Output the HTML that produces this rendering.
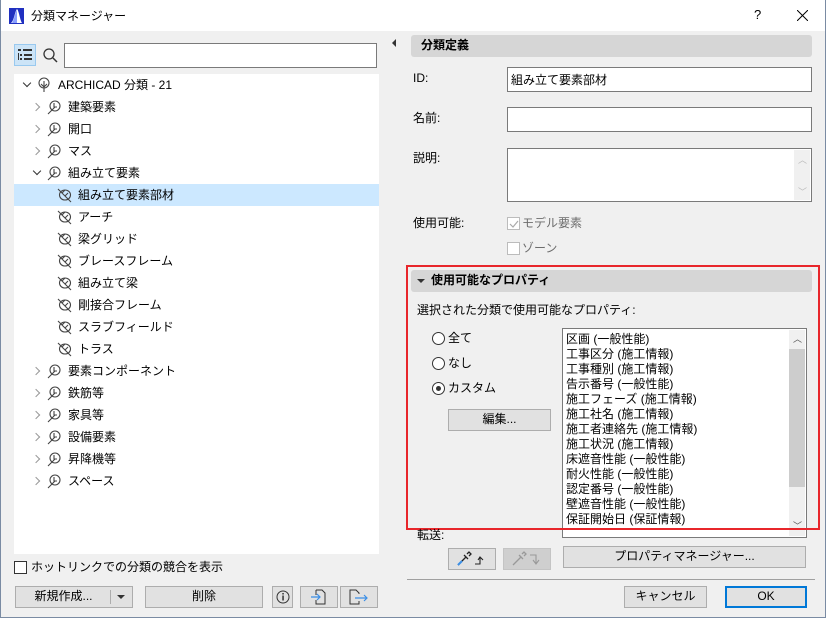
<!DOCTYPE html>
<html><head><meta charset="utf-8">
<style>
*{box-sizing:border-box;margin:0;padding:0}
body{width:826px;height:618px;overflow:hidden;background:#f0f0f0;font-family:"Liberation Sans","Noto Sans CJK JP",sans-serif;font-size:12px;color:#000;position:relative}
.a{position:absolute}
.win{left:0;top:0;width:826px;height:618px;border:1px solid #7a8ba3;border-top:none}
.title{left:0;top:0;width:826px;height:31px;background:#fff;border-left:1px solid #7a8ba3;border-right:1px solid #7a8ba3}
.t{position:absolute;white-space:nowrap;line-height:14px}
.inp{position:absolute;background:#fff;border:1px solid #7a7a7a}
.btn{position:absolute;background:#e1e1e1;border:1px solid #adadad;text-align:center;line-height:19px}
.hdr{position:absolute;background:#d6d6d6;border-radius:3px;font-weight:bold;padding-left:10px;line-height:21px}
.chev{position:absolute;width:6px;height:6px;border-right:1.3px solid #999;border-bottom:1.3px solid #999}
.cb{position:absolute;width:13px;height:13px;border:1px solid #333;background:#fff}
.rad{position:absolute;width:13px;height:13px;border:1px solid #333;border-radius:50%;background:#fff}
</style></head><body>
<div class="a title"></div>
<svg class="a" style="left:9px;top:8px" width="15" height="16"><rect x="0" y="0" width="15" height="16" fill="#2030c0"/><path d="M2 15 C5 13 6 3 8 1 C10 3 11 12 13 15 Z" fill="#fff"/><path d="M3 15 C5 12 6 5 8 2 L8 15Z" fill="#8aa0ff"/></svg>
<div class="t" style="left:31px;top:9px">分類マネージャー</div>
<div class="t" style="left:754px;top:8px;font-size:13px">?</div>
<svg class="a" style="left:797px;top:10px" width="11" height="11"><path d="M0 0L11 11M11 0L0 11" stroke="#000" stroke-width="1"/></svg>
<div class="a win"></div>

<!-- left top -->
<div class="a" style="left:14px;top:44px;width:22px;height:22px;background:#cce4f7;border:1px solid #99c9ef"></div>
<svg class="a" style="left:17px;top:48px" width="16" height="14"><rect x="1" y="1" width="3" height="2" fill="#333"/><rect x="6" y="1" width="9" height="2" fill="#333"/><rect x="1" y="5" width="1" height="7" fill="#333"/><rect x="3" y="6" width="2" height="2" fill="#333"/><rect x="7" y="6" width="8" height="2" fill="#333"/><rect x="3" y="10" width="2" height="2" fill="#333"/><rect x="7" y="10" width="8" height="2" fill="#333"/></svg>
<svg class="a" style="left:42px;top:47px" width="16" height="16"><circle cx="7" cy="7" r="5" fill="none" stroke="#333" stroke-width="1.3"/><path d="M11 11L15 15" stroke="#333" stroke-width="1.5"/></svg>
<div class="inp" style="left:64px;top:43px;width:313px;height:25px"></div>

<div class="a" style="left:14px;top:74px;width:365px;height:480px;background:#fff"></div>
<div class="a" style="left:14px;top:184px;width:365px;height:22px;background:#cce8ff"></div>

<!-- tree -->
<div id="tree"></div>
<script>
var rows=[[0,'ARCHICAD 分類 - 21','d'],[1,'建築要素','r'],[1,'開口','r'],[1,'マス','r'],[1,'組み立て要素','d'],[2,'組み立て要素部材',''],[2,'アーチ',''],[2,'梁グリッド',''],[2,'ブレースフレーム',''],[2,'組み立て梁',''],[2,'剛接合フレーム',''],[2,'スラブフィールド',''],[2,'トラス',''],[1,'要素コンポーネント','r'],[1,'鉄筋等','r'],[1,'家具等','r'],[1,'設備要素','r'],[1,'昇降機等','r'],[1,'スペース','r']];
var h='';
rows.forEach(function(r,i){
 var y=85+i*22, lv=r[0];
 var cx=[23,33,0][lv], ix=[36,46,56][lv], tx=[58,68,78][lv];
 if(r[2]=='r') h+='<div class="chev" style="left:'+(cx)+'px;top:'+(y-3)+'px;transform:rotate(-45deg)"></div>';
 if(r[2]=='d') h+='<div class="chev" style="left:'+(cx+1)+'px;top:'+(y-5)+'px;transform:rotate(45deg);border-color:#333"></div>';
 var ic;
 if(lv==0) ic='<circle cx="8" cy="6" r="5" fill="none" stroke="#444" stroke-width="1.1"/><path d="M8 4V15M5 7L8 10L11 7" stroke="#444" fill="none" stroke-width="1.1"/>';
 else if(lv==1) ic='<circle cx="9" cy="7" r="5" fill="none" stroke="#444" stroke-width="1.1"/><path d="M2 15L9 8M8 4V8H11" stroke="#444" fill="none" stroke-width="1.1"/>';
 else ic='<ellipse cx="9" cy="8" rx="5.5" ry="5" fill="none" stroke="#444" stroke-width="1.1"/><path d="M2 2L15 15M6 6L9 3M9 9L12 6" stroke="#444" fill="none" stroke-width="1.1"/>';
 h+='<svg class="a" style="left:'+ix+'px;top:'+(y-8)+'px" width="17" height="17">'+ic+'</svg>';
 h+='<div class="t" style="left:'+tx+'px;top:'+(y-7)+'px">'+r[1]+'</div>';
});
document.getElementById('tree').innerHTML=h;
</script>

<div class="cb" style="left:14px;top:561px"></div>
<div class="t" style="left:31px;top:560px">ホットリンクでの分類の競合を表示</div>
<div class="btn" style="left:15px;top:586px;width:118px;height:22px"><span style="position:absolute;left:0;width:95px">新規作成...</span></div>
<div class="a" style="left:110px;top:590px;width:1px;height:14px;background:#adadad"></div>
<div class="a" style="left:117px;top:595px;border-left:4px solid transparent;border-right:4px solid transparent;border-top:4px solid #333"></div>
<div class="btn" style="left:145px;top:586px;width:118px;height:22px">削除</div>
<div class="btn" style="left:272px;top:586px;width:21px;height:22px"></div>
<svg class="a" style="left:276px;top:590px" width="14" height="14"><circle cx="7" cy="7" r="6" fill="none" stroke="#333"/><rect x="6.3" y="3" width="1.5" height="1.5" fill="#333"/><rect x="6.3" y="5.5" width="1.5" height="5" fill="#333"/></svg>
<div class="btn" style="left:300px;top:586px;width:38px;height:22px"></div>
<svg class="a" style="left:309px;top:589px" width="20" height="16"><path d="M7 1H13L16 4V15H7V11M7 6V1" fill="none" stroke="#333"/><path d="M2 8H11M8 5L11 8L8 11" fill="none" stroke="#3a8ee6" stroke-width="1.2"/></svg>
<div class="btn" style="left:340px;top:586px;width:38px;height:22px"></div>
<svg class="a" style="left:349px;top:589px" width="22" height="16"><path d="M10 12V15H1V1H7L10 4V5" fill="none" stroke="#333"/><path d="M6 9H18M15 6L18 9L15 12" fill="none" stroke="#3a8ee6" stroke-width="1.2"/></svg>

<div class="a" style="left:392px;top:39px;border-top:4px solid transparent;border-bottom:4px solid transparent;border-right:4px solid #333"></div>

<!-- right -->
<div class="hdr" style="left:411px;top:35px;width:401px;height:22px">分類定義</div>
<div class="t" style="left:413px;top:71px">ID:</div>
<div class="inp" style="left:507px;top:67px;width:305px;height:25px"><span class="t" style="left:3px;top:5px">組み立て要素部材</span></div>
<div class="t" style="left:413px;top:111px">名前:</div>
<div class="inp" style="left:507px;top:107px;width:305px;height:25px"></div>
<div class="t" style="left:413px;top:151px">説明:</div>
<div class="inp" style="left:507px;top:148px;width:305px;height:54px"><div class="a" style="right:1px;top:1px;width:16px;height:50px;background:#f0f0f0"></div>
<span class="t" style="right:4px;top:4px;color:#bbb;font-size:9px">︿</span><span class="t" style="right:4px;top:36px;color:#bbb;font-size:9px">﹀</span></div>
<div class="t" style="left:413px;top:216px">使用可能:</div>
<div class="cb" style="left:507px;top:217px;border-color:#bcbcbc"></div>
<svg class="a" style="left:508px;top:218px" width="12" height="12"><path d="M2 6L5 9L10 3" fill="none" stroke="#aaa" stroke-width="1.2"/></svg>
<div class="t" style="left:522px;top:216px;color:#6d6d6d">モデル要素</div>
<div class="cb" style="left:507px;top:242px;border-color:#bcbcbc"></div>
<div class="t" style="left:522px;top:241px;color:#6d6d6d">ゾーン</div>

<div class="hdr" style="left:411px;top:270px;width:401px;height:22px;padding-left:20px">使用可能なプロパティ</div>
<div class="a" style="left:417px;top:279px;border-left:4px solid transparent;border-right:4px solid transparent;border-top:4px solid #333"></div>
<div class="t" style="left:417px;top:303px">選択された分類で使用可能なプロパティ:</div>
<div class="rad" style="left:432px;top:332px"></div><div class="t" style="left:448px;top:331px">全て</div>
<div class="rad" style="left:432px;top:357px"></div><div class="t" style="left:448px;top:356px">なし</div>
<div class="rad" style="left:432px;top:382px"></div><div class="a" style="left:436px;top:386px;width:5px;height:5px;border-radius:50%;background:#333"></div><div class="t" style="left:448px;top:381px">カスタム</div>
<div class="btn" style="left:448px;top:409px;width:103px;height:22px">編集...</div>

<div class="inp" style="left:562px;top:328px;width:245px;height:210px;overflow:hidden">
<div class="a" style="right:1px;top:1px;width:16px;height:206px;background:#f0f0f0"></div>
<div class="a" style="right:1px;top:20px;width:16px;height:138px;background:#cdcdcd"></div>
<span class="t" style="right:4px;top:3px;font-size:9px;color:#555">︿</span>
<span class="t" style="right:4px;top:190px;font-size:9px;color:#555">﹀</span>
<div style="position:absolute;left:3px;top:3px;line-height:15px">区画 (一般性能)<br>工事区分 (施工情報)<br>工事種別 (施工情報)<br>告示番号 (一般性能)<br>施工フェーズ (施工情報)<br>施工社名 (施工情報)<br>施工者連絡先 (施工情報)<br>施工状況 (施工情報)<br>床遮音性能 (一般性能)<br>耐火性能 (一般性能)<br>認定番号 (一般性能)<br>壁遮音性能 (一般性能)<br>保証開始日 (保証情報)</div>
</div>
<div class="a" style="left:406px;top:265px;width:414px;height:265px;border:2px solid #e8262b"></div>

<div class="t" style="left:417px;top:528px">転送:</div>
<div class="btn" style="left:448px;top:548px;width:48px;height:22px"></div>
<svg class="a" style="left:455px;top:550px" width="36" height="18"><path d="M3 15L11 7M9 5L13 9M12 4L14 2L16 4L14 6" fill="none" stroke="#222" stroke-width="1.3"/><path d="M3 15L7 11" stroke="#3a8ee6" stroke-width="2"/><path d="M20 14H25V8M23 10L25 7L28 10" fill="none" stroke="#222" stroke-width="1.1"/></svg>
<div class="btn" style="left:503px;top:548px;width:48px;height:22px;background:#cfcfcf;border-color:#c4c4c4"></div>
<svg class="a" style="left:510px;top:550px" width="36" height="18"><path d="M3 15L11 7M9 5L13 9M12 4L14 2L16 4L14 6" fill="none" stroke="#999" stroke-width="1.3"/><path d="M20 5H26V13M23 10L26 14L29 10" fill="none" stroke="#999" stroke-width="1.1"/></svg>
<div class="btn" style="left:563px;top:546px;width:243px;height:22px">プロパティマネージャー...</div>
<div class="a" style="left:407px;top:579px;width:408px;height:1px;background:#a0a0a0"></div>
<div class="btn" style="left:624px;top:586px;width:83px;height:22px">キャンセル</div>
<div class="btn" style="left:725px;top:586px;width:82px;height:22px;border:2px solid #0078d7;line-height:17px">OK</div>
</body></html>
